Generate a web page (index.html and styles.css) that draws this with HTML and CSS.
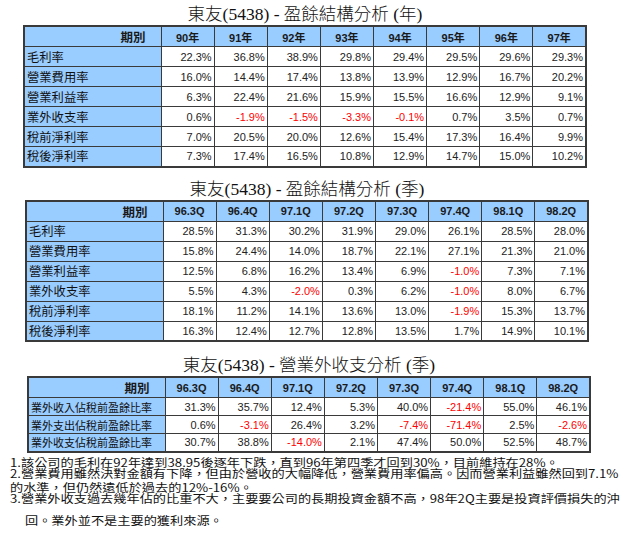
FILE: index.html
```html
<!DOCTYPE html>
<html lang="zh-Hant">
<head>
<meta charset="utf-8">
<title>東友(5438) 財務分析</title>
<link rel="stylesheet" href="styles.css">
</head>
<body>
<div class="page">
  <section class="block block-1">
    <h2 class="title">東友(5438) - 盈餘結構分析 (年)</h2>
    <table class="grid">
      <colgroup><col class="c-label"><col><col><col><col><col><col><col><col></colgroup>
      <thead>
        <tr><th class="h-label">期別</th><th>90年</th><th>91年</th><th>92年</th><th>93年</th><th>94年</th><th>95年</th><th>96年</th><th>97年</th></tr>
      </thead>
      <tbody>
        <tr><td class="label">毛利率</td><td>22.3%</td><td>36.8%</td><td>38.9%</td><td>29.8%</td><td>29.4%</td><td>29.5%</td><td>29.6%</td><td>29.3%</td></tr>
        <tr><td class="label">營業費用率</td><td>16.0%</td><td>14.4%</td><td>17.4%</td><td>13.8%</td><td>13.9%</td><td>12.9%</td><td>16.7%</td><td>20.2%</td></tr>
        <tr><td class="label">營業利益率</td><td>6.3%</td><td>22.4%</td><td>21.6%</td><td>15.9%</td><td>15.5%</td><td>16.6%</td><td>12.9%</td><td>9.1%</td></tr>
        <tr><td class="label">業外收支率</td><td>0.6%</td><td class="neg">-1.9%</td><td class="neg">-1.5%</td><td class="neg">-3.3%</td><td class="neg">-0.1%</td><td>0.7%</td><td>3.5%</td><td>0.7%</td></tr>
        <tr><td class="label">稅前淨利率</td><td>7.0%</td><td>20.5%</td><td>20.0%</td><td>12.6%</td><td>15.4%</td><td>17.3%</td><td>16.4%</td><td>9.9%</td></tr>
        <tr><td class="label">稅後淨利率</td><td>7.3%</td><td>17.4%</td><td>16.5%</td><td>10.8%</td><td>12.9%</td><td>14.7%</td><td>15.0%</td><td>10.2%</td></tr>
      </tbody>
    </table>
  </section>

  <section class="block block-2">
    <h2 class="title">東友(5438) - 盈餘結構分析 (季)</h2>
    <table class="grid">
      <colgroup><col class="c-label"><col><col><col><col><col><col><col><col></colgroup>
      <thead>
        <tr><th class="h-label">期別</th><th>96.3Q</th><th>96.4Q</th><th>97.1Q</th><th>97.2Q</th><th>97.3Q</th><th>97.4Q</th><th>98.1Q</th><th>98.2Q</th></tr>
      </thead>
      <tbody>
        <tr><td class="label">毛利率</td><td>28.5%</td><td>31.3%</td><td>30.2%</td><td>31.9%</td><td>29.0%</td><td>26.1%</td><td>28.5%</td><td>28.0%</td></tr>
        <tr><td class="label">營業費用率</td><td>15.8%</td><td>24.4%</td><td>14.0%</td><td>18.7%</td><td>22.1%</td><td>27.1%</td><td>21.3%</td><td>21.0%</td></tr>
        <tr><td class="label">營業利益率</td><td>12.5%</td><td>6.8%</td><td>16.2%</td><td>13.4%</td><td>6.9%</td><td class="neg">-1.0%</td><td>7.3%</td><td>7.1%</td></tr>
        <tr><td class="label">業外收支率</td><td>5.5%</td><td>4.3%</td><td class="neg">-2.0%</td><td>0.3%</td><td>6.2%</td><td class="neg">-1.0%</td><td>8.0%</td><td>6.7%</td></tr>
        <tr><td class="label">稅前淨利率</td><td>18.1%</td><td>11.2%</td><td>14.1%</td><td>13.6%</td><td>13.0%</td><td class="neg">-1.9%</td><td>15.3%</td><td>13.7%</td></tr>
        <tr><td class="label">稅後淨利率</td><td>16.3%</td><td>12.4%</td><td>12.7%</td><td>12.8%</td><td>13.5%</td><td>1.7%</td><td>14.9%</td><td>10.1%</td></tr>
      </tbody>
    </table>
  </section>

  <section class="block block-3">
    <h2 class="title">東友(5438) - 營業外收支分析 (季)</h2>
    <table class="grid grid-small">
      <colgroup><col class="c-label"><col><col><col><col><col><col><col><col></colgroup>
      <thead>
        <tr><th class="h-label">期別</th><th>96.3Q</th><th>96.4Q</th><th>97.1Q</th><th>97.2Q</th><th>97.3Q</th><th>97.4Q</th><th>98.1Q</th><th>98.2Q</th></tr>
      </thead>
      <tbody>
        <tr><td class="label">業外收入佔稅前盈餘比率</td><td>31.3%</td><td>35.7%</td><td>12.4%</td><td>5.3%</td><td>40.0%</td><td class="neg">-21.4%</td><td>55.0%</td><td>46.1%</td></tr>
        <tr><td class="label">業外支出佔稅前盈餘比率</td><td>0.6%</td><td class="neg">-3.1%</td><td>26.4%</td><td>3.2%</td><td class="neg">-7.4%</td><td class="neg">-71.4%</td><td>2.5%</td><td class="neg">-2.6%</td></tr>
        <tr><td class="label">業外收支佔稅前盈餘比率</td><td>30.7%</td><td>38.8%</td><td class="neg">-14.0%</td><td>2.1%</td><td>47.4%</td><td>50.0%</td><td>52.5%</td><td>48.7%</td></tr>
      </tbody>
    </table>
  </section>

  <div class="notes">
    <p class="line">1.該公司的毛利在92年達到38.95後逐年下跌，直到96年第四季才回到30%，目前維持在28%。</p>
    <p class="line">2.營業費用雖然決對金額有下降，但由於營收的大幅降低，營業費用率偏高。因而營業利益雖然回到7.1%</p>
    <p class="line line-gap">的水準，但仍然遠低於過去的12%-16%。</p>
    <p class="line">3.營業外收支過去幾年佔的比重不大，主要要公司的長期投資金額不高，98年2Q主要是投資評價損失的沖</p>
    <p class="line line-indent">回。業外並不是主要的獲利來源。</p>
  </div>
</div>
</body>
</html>
```

FILE: styles.css
```css
* { box-sizing: border-box; }

html, body {
  margin: 0;
  padding: 0;
  background: #ffffff;
}

.page {
  display: flex;
  flex-direction: column;
  width: 640px;
  height: 536px;
  overflow: hidden;
  padding-top: 4px;
}

.block {
  display: flex;
  flex-direction: column;
  width: 564px;
}

.block-1 { margin-left: 23px; }
.block-2 { margin-left: 25px; margin-top: 11px; }
.block-3 { margin-left: 27px; margin-top: 13px; }

.title {
  margin: 0;
  font-family: "Liberation Serif", "Noto Sans CJK TC", serif;
  font-weight: 300;
  font-size: 17.5px;
  line-height: 21px;
  color: #111;
  text-align: center;
}

.grid {
  width: 564px;
  table-layout: fixed;
  border-collapse: collapse;
  border: 2px solid #3a3a3a;
  font-family: "Liberation Sans", "Noto Sans CJK TC", sans-serif;
  font-size: 11px;
  color: #222;
}

.grid .c-label { width: 137px; }

.grid th,
.grid td {
  border: 1px solid #3a3a3a;
  height: 20px;
  padding: 0 2px;
  white-space: nowrap;
  overflow: hidden;
}

.grid th {
  background: #99ccff;
  font-weight: bold;
  text-align: center;
  color: #1a1a1a;
}

.grid th.h-label {
  text-align: right;
  padding-right: 15px;
  font-size: 12.5px;
}

.grid td {
  text-align: right;
  background: #ffffff;
}

.grid td.label {
  text-align: left;
  background: #99ccff;
  font-family: "Noto Sans CJK TC", sans-serif;
  font-size: 12.3px;
  color: #111;
}

.grid td.neg { color: #ff0000; }

.grid-small th,
.grid-small td { height: 18px; }

.grid-small td.label { font-size: 11px; }

.notes {
  margin-top: 5px;
  padding-left: 10px;
  font-family: "Noto Sans CJK TC", sans-serif;
  font-size: 13.2px;
  color: #111;
  transform: scaleY(0.85);
  transform-origin: top left;
}

.line {
  margin: 0;
  line-height: 12.8px;
  white-space: nowrap;
}

.line-gap { margin-top: 3.5px; }

.line-indent {
  margin-top: 13px;
  padding-left: 15px;
}
```
